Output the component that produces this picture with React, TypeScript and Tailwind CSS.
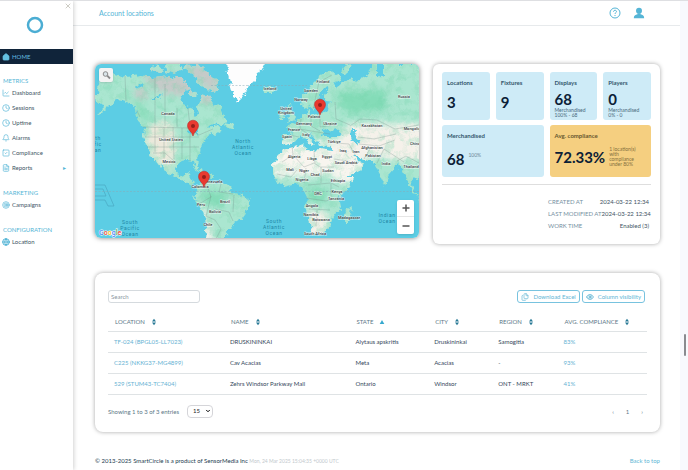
import type { ReactNode } from "react";
import { Bell, ChartLine, ChevronDown, Clock, Eye, Files, FileText, Globe, House, SquareCheck, Target, X } from "lucide-react";

type NavItem = { label: string; icon: ReactNode; more?: boolean };

const ICON = "size-2 shrink-0 text-[#55b5d6]";

const NAV: { title: string; items: NavItem[] }[] = [
  {
    title: "METRICS",
    items: [
      { label: "Dashboard", icon: <ChartLine className={ICON} /> },
      { label: "Sessions", icon: <Clock className={ICON} /> },
      { label: "Uptime", icon: <Clock className={ICON} /> },
      { label: "Alarms", icon: <Bell className={ICON} /> },
      { label: "Compliance", icon: <SquareCheck className={ICON} /> },
      { label: "Reports", icon: <FileText className={ICON} />, more: true },
    ],
  },
  { title: "MARKETING", items: [{ label: "Campaigns", icon: <Target className={ICON} /> }] },
  { title: "CONFIGURATION", items: [{ label: "Location", icon: <Globe className={ICON} strokeWidth={3} /> }] },
];

const COLUMNS = [
  { label: "LOCATION", width: "w-[21.5%]" },
  { label: "NAME", width: "w-[23.3%]" },
  { label: "STATE", width: "w-[14.6%]", sorted: true },
  { label: "CITY", width: "w-[11.9%]" },
  { label: "REGION", width: "w-[12.1%]" },
  { label: "AVG. COMPLIANCE", width: "w-[16.6%]" },
];

const ROWS = [
  ["TF-024 (BPGL05-LL7023)", "DRUSKININKAI", "Alytaus apskritis", "Druskininkai", "Samogitia", "83%"],
  ["C225 (NKKG37-MG4899)", "Cav Acacias", "Meta", "Acacias", "-", "93%"],
  ["529 (STUM43-TC7404)", "Zehrs Windsor Parkway Mall", "Ontario", "Windsor", "ONT - MRKT", "41%"],
];

const DETAILS = [
  ["CREATED AT", "2024-03-22 12:34"],
  ["LAST MODIFIED AT", "2024-03-22 12:34"],
  ["WORK TIME", "Enabled (3)"],
];

const COUNTRIES: [number, number, string][] = [
  [73, 51, "Canada"], [76, 77, "United States"], [74, 99, "Mexico"], [118, 119, "Venezuela"],
  [105, 124, "Colombia"], [130, 139, "Brazil"], [106, 142, "Peru"], [120, 149, "Bolivia"],
  [113, 162, "Chile"], [175, 26, "Iceland"], [228, 19, "Finland"], [216, 28, "Sweden"],
  [206, 37, "Norway"], [191, 46, "United"], [191, 50, "Kingdom"], [219, 54, "Poland"],
  [209, 61, "Germany"], [199, 67, "France"], [192, 74, "Spain"], [211, 72, "Italy"],
  [235, 61, "Ukraine"], [309, 34, "Russia"], [277, 63, "Kazakhstan"], [317, 66, "Mongolia"],
  [239, 79, "Türkiye"], [320, 81, "China"], [248, 88, "Iraq"], [261, 89, "Iran"],
  [277, 85, "Afghanistan"], [278, 93, "Pakistan"], [291, 101, "India"], [316, 104, "Thailand"],
  [199, 94, "Algeria"], [217, 96, "Libya"], [232, 94, "Egypt"], [251, 100, "Saudi Arabia"],
  [195, 107, "Mali"], [209, 108, "Niger"], [220, 112, "Chad"], [233, 108, "Sudan"],
  [207, 117, "Nigeria"], [243, 118, "Ethiopia"], [223, 131, "DRC"], [242, 129, "Kenya"],
  [241, 136, "Tanzania"], [217, 143, "Angola"], [216, 152, "Namibia"], [226, 157, "Botswana"],
  [254, 155, "Madagascar"], [220, 171, "South Africa"],
];

const OCEANS: [number, number, string[]][] = [
  [148, 79, ["North", "Atlantic", "Ocean"]],
  [35, 160, ["South", "Pacific", "Ocean"]],
  [179, 159, ["South", "Atlantic", "Ocean"]],
  [292, 153, ["Indian", "Ocean"]],
  [3, 76, ["th", "fic", "an"]],
];

const LAND = [
  // North and Central America
  "M8 44L5 39L1 38L0 31L6 27L1 24L8 14L18 10L30 13L46 11L60 14L74 12L86 17L92 20L96 25L89 27L86 33L88 41L97 45L100 53L103 50L102 43L105 38L106 30L115 33L119 42L125 41L129 52L133 58L124 61L117 60L113 64L125 62L128 66L120 71L116 68L112 74L107 80L106 89L101 95L105 104L101 104L99 98L92 97L83 99L80 106L84 112L90 110L95 107L94 113L99 117L98 122L104 124L108 119L104 126L96 122L92 118L84 115L73 110L67 102L62 94L58 88L67 101L66 104L56 91L51 81L49 72L50 65L43 55L41 46L35 39L27 37L21 36L14 42L7 49L2 52Z",
  // Arctic islands
  "M56 3L64 1L68 6L63 9L56 8Z", "M70 0L84 0L87 6L79 10L71 7Z", "M90 0L106 2L112 8L121 16L124 26L119 29L113 25L108 22L100 20L103 14L95 9L88 4Z",
  "M80 12L88 12L87 17L82 18Z", "M93 26L101 28L100 32L93 31Z", "M130 59L139 61L138 65L131 64Z",
  // Caribbean
  "M97 104L105 105L111 109L105 108Z", "M112 110L119 111L118 114L112 113Z",
  // South America
  "M105 119L111 115L122 119L130 120L136 124L139 129L150 132L155 136L152 145L149 153L140 158L134 167L128 175L110 175L112 162L111 153L104 142L99 134L101 127Z",
  // Africa
  "M177 100L181 95L187 87L194 84L208 80L211 85L218 88L225 84L237 86L239 95L245 108L248 113L258 113L254 122L244 133L246 143L238 153L234 163L227 170L219 171L214 156L210 143L212 133L207 123L200 119L189 122L181 117L177 110Z",
  "M257 143L255 154L251 159L248 154L251 147Z",
  // Europe and Asia
  "M187 79L187 71L195 71L196 66L191 63L199 60L206 54L211 50L213 44L215 50L225 51L231 47L232 40L239 38L231 37L229 31L233 25L229 23L224 31L223 39L218 47L215 42L209 45L206 40L207 34L216 23L223 12L234 6L246 13L245 18L238 17L241 24L248 18L257 15L265 16L273 11L277 1L282 0L282 14L288 12L288 0L328 0L328 116L318 112L316 119L322 132L325 138L312 118L309 110L303 100L294 110L290 122L283 106L280 99L269 95L258 91L263 98L269 99L265 106L247 115L238 96L237 84L226 80L221 77L216 70L213 71L219 80L216 82L206 70L198 79L191 81Z",
  // British Isles and Iceland
  "M194 40L198 42L197 47L201 55L192 58L195 51L192 46Z", "M185 48L190 48L189 55L184 55Z", "M168 24L175 22L182 25L178 28L170 28Z",
  "M249 2L256 0L253 7L250 12L247 9Z",
];

const BORDERS =
  "M48 63L94 64L104 71L118 65M30 12L31 37M42 47L45 53M60 14L60 62M70 20L70 62M82 44L82 63M93 44L95 63M60 63L60 88M69 63L69 95M78 63L79 95M87 64L87 95M95 70L95 97M50 73L104 73M52 83L104 83M58 89L70 89L80 98M112 121L116 133L104 140M116 132L111 152L120 156L126 165L121 175M126 120L124 128L138 130M120 145L134 148L138 157M139 131L138 148M187 98L198 91L209 103L219 99L225 103L239 103M197 82L198 91M219 87L220 99M182 110L196 113L202 106M211 104L209 119M226 103L226 119M213 121L236 119L244 123M211 134L231 137L244 133M214 145L235 146M222 146L221 162M236 120L236 133M195 71L204 73M206 55L205 65L212 69M216 51L216 62L225 67M225 52L225 63L240 61M204 65L235 70M218 45L224 18L237 11M240 38L241 55L255 61M255 62L265 55L282 56L300 65L324 61M263 73L279 75L301 70M264 80L284 82L300 76M269 95L276 83M282 99L289 85L309 98M302 97L311 92L324 99M240 79L254 80L260 91M239 95L253 97L259 102";

function WorldMap() {
  return (
    <svg viewBox="0 0 324 174" preserveAspectRatio="xMidYMid slice" className="absolute inset-0 size-full" role="img" aria-label="Map of locations">
      <defs>
        <filter id="coast" x="-5%" y="-5%" width="110%" height="110%" colorInterpolationFilters="sRGB">
          <feTurbulence type="fractalNoise" baseFrequency="0.2" numOctaves="3" seed="4" />
          <feDisplacementMap in="SourceGraphic" scale="7" xChannelSelector="R" yChannelSelector="G" />
        </filter>
        <filter id="terrain" x="0" y="0" width="100%" height="100%" colorInterpolationFilters="sRGB">
          <feTurbulence type="fractalNoise" baseFrequency="0.11" numOctaves="4" seed="9" />
          <feColorMatrix values="0 0 0 0 0.46  0 0 0 0 0.83  0 0 0 0 0.67  3.6 0 0 0 -1.65" />
        </filter>
        <filter id="soft" colorInterpolationFilters="sRGB">
          <feGaussianBlur stdDeviation="3" />
        </filter>
        <clipPath id="land">
          {LAND.map((d) => (
            <path key={d} d={d} />
          ))}
        </clipPath>
      </defs>
      <rect width="324" height="174" fill="#5ccde4" />
      <g filter="url(#coast)">
        <g clipPath="url(#land)">
          <rect x="-4" y="-4" width="336" height="184" fill="#aae6d0" />
          <g filter="url(#soft)">
            <path d="M55 60L76 58L80 74L79 94L73 107L58 92L51 76Z" fill="#ece9db" />
            <path d="M46 8L100 10L98 29L84 32L72 30L58 24ZM88 0L120 4L124 30L108 22ZM104 27L118 30L118 39L107 40ZM38 24L52 26L52 36L42 34Z" fill="#c5cac8" />
            <path d="M172 76L240 78L262 94L272 100L260 120L245 118L238 111L177 113Z" fill="#f8f5ef" />
            <path d="M234 86L254 60L300 60L330 60L330 98L300 96L284 92L260 98Z" fill="#f5f1ea" />
            <path d="M211 146L233 149L229 174L214 174Z" fill="#f5f0e8" />
            <path d="M102 143L111 148L118 178L106 178Z" fill="#f5f2ed" />
            <path d="M240 28L290 26L292 46L250 50ZM37 35L50 58L57 60L46 38ZM104 128L132 127L128 142L112 142ZM212 124L232 124L231 138L213 137Z" fill="#84dcb8" />
          </g>
          <rect width="324" height="174" filter="url(#terrain)" opacity="0.3" />
        </g>
        <path d="M132 -4L133 11L137 26L142 38L147 33L153 23L161 15L165 7L171 -4Z" fill="#fdfdfd" />
        <path d="M226 70L230 65L237 68L240 64L248 70L243 73L229 73ZM256 66L262 66L260 71L264 79L258 79L255 71ZM91 66L97 65L97 72L94 69ZM97 65L103 67L101 71ZM103 72L108 70ZM40 22L48 19L46 24ZM57 35L68 30L63 35Z" fill="#5ccde4" />
      </g>
      <path d={BORDERS} fill="none" stroke="#748e89" strokeWidth="0.5" strokeOpacity="0.6" />
      <path d="M0 127.500H324M116 21.500H212" fill="none" stroke="#8aa9b4" strokeWidth="0.5" strokeDasharray="2 1.500" />
      <path d="M0 121L10 121L19 142L13 142L10 136L0 136M0 125L8 125L11 132L0 132" fill="none" stroke="#47a3bc" strokeWidth="0.6" />
      <g fontFamily="Roboto, sans-serif" fontSize="5" textAnchor="middle" fill="#2187a5">
        {OCEANS.map(([x, y, lines]) =>
          lines.map((line, i) => (
            <text key={`${x}${line}`} x={x} y={y + i * 6} letterSpacing="0.6">
              {line}
            </text>
          ))
        )}
      </g>
      <g fontFamily="Roboto, sans-serif" fontSize="4" fontWeight="500" textAnchor="middle" fill="#333b3d" stroke="#ffffff" strokeWidth="1" strokeOpacity="0.7" paintOrder="stroke">
        {COUNTRIES.map(([x, y, name]) => (
          <text key={name} x={x} y={y}>
            {name}
          </text>
        ))}
      </g>
      {[[98, 72], [225, 51], [109, 123]].map(([x, y]) => (
        <g key={x} transform={`translate(${x} ${y})`}>
          <path d="M0 0C-0.800 -4 -5.500 -6 -5.500 -10.300A5.500 5.500 0 0 1 5.500 -10.300C5.500 -6 0.800 -4 0 0Z" fill="#e93a30" stroke="#b9302b" strokeWidth="0.6" />
          <circle cy="-10" r="2" fill="#971f1b" />
        </g>
      ))}
      <text x="4" y="171" fontFamily="Roboto, sans-serif" fontSize="7" fontWeight="500" stroke="#ffffff" strokeWidth="1" paintOrder="stroke">
        <tspan fill="#4285f4">G</tspan>
        <tspan fill="#ea4335">o</tspan>
        <tspan fill="#fbbc05">o</tspan>
        <tspan fill="#4285f4">g</tspan>
        <tspan fill="#34a853">l</tspan>
        <tspan fill="#ea4335">e</tspan>
      </text>
    </svg>
  );
}

function SortIcon({ sorted }: { sorted?: boolean }) {
  return (
    <svg viewBox="0 0 6 8" className="h-2 w-1.5" aria-hidden="true">
      {sorted ? (
        <path d="M3 2L5.300 6H0.700Z" fill="#36a9cf" />
      ) : (
        <path d="M3 0.800L5 3.400H1ZM3 7.200L5 4.600H1Z" fill="#287995" />
      )}
    </svg>
  );
}

function Tile({ label, value, note }: { label: string; value: string; note?: string[] }) {
  return (
    <div className="flex h-12 flex-1 flex-col rounded-[3px] bg-[#ceebf7] px-[5px] pt-2">
      <p className="text-[6px] leading-[6px] font-bold text-[#33566c]">{label}</p>
      <p className={note ? "mt-1 text-[15px] leading-[18px] font-bold" : "mt-2 text-[15px] leading-[16px] font-bold"}>{value}</p>
      {note?.map((n) => (
        <p key={n} className="text-[5px] leading-[5px] text-[#49697c]">
          {n}
        </p>
      ))}
    </div>
  );
}

function Sidebar() {
  return (
    <aside className="relative w-[73px] shrink-0 bg-white shadow-[1px_0_4px_rgba(0,0,0,0.18)]">
      <button aria-label="Close menu" className="absolute top-px right-px text-[#b4b2a6]">
        <X className="size-2" />
      </button>
      <div className="flex h-12 items-center justify-center pr-1">
        <svg viewBox="0 0 18 18" className="size-[18px]" aria-label="SmartCircle">
          <circle cx="9" cy="9" r="7" fill="none" stroke="#4badd3" strokeWidth="2.500" />
        </svg>
      </div>
      <a href="#" className="flex h-[15px] items-center gap-0.5 bg-[#10243a] pl-0.5 text-[6px] text-[#63bfe0]">
        <House className="size-2" fill="currentColor" />
        HOME
      </a>
      <nav className="pt-[13px]">
        {NAV.map((group) => (
          <section key={group.title} className="mb-[14px]">
            <h2 className="pl-[3px] text-[6px] leading-[8px] text-[#55b5d6]">{group.title}</h2>
            {group.items.map((item) => (
              <a key={item.label} href="#" className="flex h-[15px] items-center gap-0.5 pl-0.5 text-[6px] text-[#3e5666]">
                {item.icon}
                {item.label}
                {item.more && <span className="mr-[7px] ml-auto text-[#55b5d6]">▸</span>}
              </a>
            ))}
          </section>
        ))}
      </nav>
    </aside>
  );
}

function Summary() {
  return (
    <section className="rounded-md bg-white px-[9px] pt-2 pb-3 shadow-[0_0_4px_rgba(0,0,0,0.35)]">
      <div className="flex gap-1.5">
        <Tile label="Locations" value="3" />
        <Tile label="Fixtures" value="9" />
        <Tile label="Displays" value="68" note={["Merchandised", "100% - 68"]} />
        <Tile label="Players" value="0" note={["Merchandised", "0% - 0"]} />
      </div>
      <div className="mt-[5px] flex gap-1.5">
        <div className="h-[52px] flex-1 rounded-[3px] bg-[#ceebf7] px-[5px] pt-2">
          <p className="text-[6px] leading-[6px] font-bold text-[#33566c]">Merchandised</p>
          <div className="mt-3 flex gap-1">
            <p className="text-[15px] leading-[16px] font-bold">68</p>
            <p className="text-[5px] leading-[8px] text-[#6d8796]">100%</p>
          </div>
        </div>
        <div className="h-[52px] flex-1 rounded-[3px] bg-[#f5cf80] px-[5px] pt-2">
          <p className="text-[6px] leading-[6px] font-bold text-[#66552e]">Avg. compliance</p>
          <div className="mt-2 flex items-center gap-1">
            <p className="text-[15px] leading-[16px] font-bold">72.33%</p>
            <p className="w-8 text-[5px] leading-[5px] text-[#84703f]">1 location(s) with compliance under 80%</p>
          </div>
        </div>
      </div>
      <dl className="mt-[7px] border-t border-[#dedede] pt-[11px] text-[6px] leading-[12px]">
        {DETAILS.map(([label, value]) => (
          <div key={label} className="mr-0.5 ml-auto flex w-[101px] justify-between whitespace-nowrap">
            <dt className="text-[#7590a1]">{label}</dt>
            <dd className="text-[#3e5363]">{value}</dd>
          </div>
        ))}
      </dl>
    </section>
  );
}

function LocationsTable() {
  return (
    <section className="mt-[29px] rounded-lg bg-white px-[13px] pt-[17px] pb-[14px] shadow-[0_0_4px_rgba(0,0,0,0.35)]">
      <div className="flex h-[13px] items-stretch justify-between">
        <input
          type="search"
          placeholder="Search"
          aria-label="Search"
          className="w-[92px] rounded-[3px] border border-[#d5dade] px-0.5 text-[6px] placeholder:text-[#8b979f]"
        />
        <div className="flex gap-0.5 pr-0.5 text-[#62b6d5]">
          <button className="flex items-center gap-1 rounded-[3px] border border-[#78c3df] px-[3px] text-[6px]">
            <Files className="size-2" />
            Download Excel
          </button>
          <button className="flex items-center gap-1 rounded-[3px] border border-[#78c3df] px-[3px] text-[6px]">
            <Eye className="size-2" strokeWidth={3} />
            Column visibility
          </button>
        </div>
      </div>
      <table className="mt-[10px] w-full table-fixed text-left text-[6px] text-[#33475a]">
        <thead>
          <tr className="h-[18px] border-b border-[#dfe3e5]">
            {COLUMNS.map((c) => (
              <th key={c.label} className={`${c.width} pl-[7px] font-normal whitespace-nowrap text-[#5d7787]`}>
                <button className="flex items-center gap-1.5">
                  {c.label}
                  <SortIcon sorted={c.sorted} />
                </button>
              </th>
            ))}
          </tr>
        </thead>
        <tbody>
          {ROWS.map((row) => (
            <tr key={row[0]} className="h-[21px] border-b border-[#dfe3e5]">
              {row.map((cell, i) => (
                <td key={i} className="pl-1.5 whitespace-nowrap">
                  {i === 0 || i === 5 ? (
                    <a href="#" className="text-[#66b2d3]">
                      {cell}
                    </a>
                  ) : (
                    cell
                  )}
                </td>
              ))}
            </tr>
          ))}
        </tbody>
      </table>
      <div className="mt-[10px] flex items-center text-[6px] text-[#5d7787]">
        <p>Showing 1 to 3 of 3 entries</p>
        <div className="relative ml-2 h-[13px] w-[26px]">
          <select aria-label="Entries per page" className="size-full appearance-none rounded-[4px] border border-[#d5d5d9] pl-[5px] text-[6px] leading-[10px] text-[#222222]">
            <option>15</option>
            <option>50</option>
          </select>
          <ChevronDown className="pointer-events-none absolute top-[3px] right-0.5 size-1.5 text-black" strokeWidth={4} />
        </div>
        <div className="ml-auto flex gap-3 pr-1">
          <button aria-label="Previous page">‹</button>
          <button>1</button>
          <button aria-label="Next page">›</button>
        </div>
      </div>
    </section>
  );
}

export default function App() {
  return (
    <div className="flex min-h-screen overflow-hidden border-t border-[#dedfe2] bg-white font-['Lato',sans-serif] text-[#0b2036]">
      <Sidebar />
      <div className="min-w-0 flex-1">
        <header className="flex h-[25px] items-center justify-between border-b border-[#e7eaec] pr-[35px] pl-[26px]">
          <h1 className="text-[7px] text-[#55b5d6]">Account locations</h1>
          <div className="flex items-center gap-3 text-[#55b5d6]">
            <button aria-label="Help">
              <svg viewBox="0 0 12 12" className="size-3" fill="none" stroke="currentColor">
                <circle cx="6" cy="6" r="5" />
                <path d="M4.500 4.700C4.500 2.800 7.500 2.800 7.500 4.600C7.500 5.700 6 5.700 6 7M6 8V9" />
              </svg>
            </button>
            <button aria-label="Account">
              <svg viewBox="0 0 12 12" className="size-3" fill="currentColor">
                <circle cx="6" cy="3.700" r="3" />
                <path d="M4.500 6.300H7.500V7.300C9.800 7.700 11.200 8.700 11.200 11.200H0.800C0.800 8.700 2.200 7.700 4.500 7.300Z" />
              </svg>
            </button>
          </div>
        </header>
        <main className="pt-[38px] pr-5 pl-[22px]">
          <div className="grid grid-cols-[324fr_227fr] items-start gap-3.5">
            <section className="relative h-[174px] overflow-hidden rounded-md shadow-[0_0_5px_rgba(0,0,0,0.5)]">
              <WorldMap />
              <button aria-label="Search map" className="absolute top-1 left-1 flex size-3.5 items-center justify-center rounded-xs bg-[#f3f3f3] shadow-sm">
                <svg viewBox="0 0 10 10" className="size-2.5" fill="none" stroke="#8c8c8c">
                  <circle cx="4.500" cy="4" r="2.300" fill="#d9e4e8" />
                  <path d="M6.200 5.700L9 8.500" strokeWidth="1.800" />
                </svg>
              </button>
              <div className="absolute right-[5px] bottom-1 flex w-[17px] flex-col divide-y divide-[#e6e6e6] rounded-xs bg-white text-[#555555] shadow-sm">
                <button aria-label="Zoom in" className="flex h-[17px] items-center justify-center">
                  <svg viewBox="0 0 8 8" className="size-2" stroke="currentColor" strokeWidth="1.500">
                    <path d="M4 0.500V7.500M0.500 4H7.500" />
                  </svg>
                </button>
                <button aria-label="Zoom out" className="flex h-[17px] items-center justify-center">
                  <svg viewBox="0 0 8 8" className="size-2" stroke="currentColor" strokeWidth="1.500">
                    <path d="M0.500 4H7.500" />
                  </svg>
                </button>
              </div>
            </section>
            <Summary />
          </div>
          <LocationsTable />
          <footer className="flex items-center justify-between pt-[25px] text-[6px] leading-[8px]">
            <p className="text-[#233c50]">
              © 2013-2025 SmartCircle is a product of SensorMedia Inc <span className="text-[5px] text-[#c2c8cc]">Mon, 24 Mar 2025 15:04:35 +0000 UTC</span>
            </p>
            <a href="#" className="text-[#62b6d5]">
              Back to top
            </a>
          </footer>
        </main>
      </div>
      <div className="relative w-2 shrink-0 bg-[#f8f9fd]">
        <span className="absolute top-[71%] right-0.5 h-[22px] w-0.5 rounded-full bg-[#8a8b90]" />
      </div>
    </div>
  );
}
